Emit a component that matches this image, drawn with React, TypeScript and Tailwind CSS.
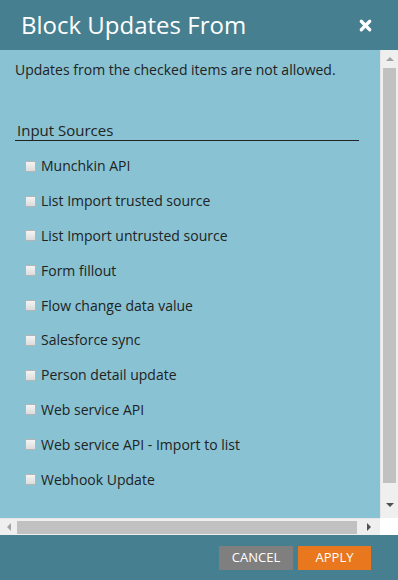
import { X } from "lucide-react";

const sources = [
  "Munchkin API",
  "List Import trusted source",
  "List Import untrusted source",
  "Form fillout",
  "Flow change data value",
  "Salesforce sync",
  "Person detail update",
  "Web service API",
  "Web service API - Import to list",
  "Webhook Update",
];

function Arrow({ dir, className }: { dir: "up" | "down" | "left" | "right"; className: string }) {
  const pts = {
    up: "0,4 4,0 8,4",
    down: "0,0 8,0 4,4",
    left: "4,0 4,8 0,4",
    right: "0,0 0,8 4,4",
  }[dir];
  const vertical = dir === "up" || dir === "down";
  return (
    <svg width={vertical ? 8 : 4} height={vertical ? 4 : 8} className={className}>
      <polygon points={pts} fill="currentColor" />
    </svg>
  );
}

export default function App() {
  return (
    <div
      className="w-[398px] h-[580px] flex flex-col bg-[#467f8f] overflow-hidden"
      style={{ fontFamily: "'Open Sans', 'Noto Sans', sans-serif" }}
    >
      {/* Header */}
      <div className="h-[50px] flex items-center justify-between pl-[21px] pr-[24px] shrink-0">
        <span className="text-white text-[24px] leading-none">Block Updates From</span>
        <X size={17} strokeWidth={4.5} className="text-white" />
      </div>

      {/* Body + vertical scrollbar */}
      <div className="flex h-[468px] shrink-0">
        <div className="flex-1 bg-[#88c2d3] pl-[15px] pt-[11px] text-[#222]">
          <p className="text-[14px] leading-[18px]">Updates from the checked items are not allowed.</p>

          <div className="mt-[42px] w-[344px] border-b border-[#222] pl-[2px] pb-[1px]">
            <span className="text-[15px] leading-[18px] block">Input Sources</span>
          </div>

          <ul className="mt-[8px] pl-[10px]">
            {sources.map((s) => (
              <li key={s} className="h-[34.8px] flex items-center gap-[5px]">
                <span className="w-[11px] h-[11px] border border-[#b5b5b5] bg-gradient-to-b from-[#f4f4f4] to-[#dcdcdc] rounded-[1px]" />
                <span className="text-[14px] leading-none">{s}</span>
              </li>
            ))}
          </ul>
        </div>

        <div className="w-[18px] bg-[#efefef] border-l border-[#e6e6e6] flex flex-col items-center pb-[4px]">
          <div className="h-[18px] flex items-center justify-center">
            <Arrow dir="up" className="text-[#a3a3a3]" />
          </div>
          <div className="w-[13px] h-[415px] bg-[#c1c1c1]" />
          <div className="flex-1" />
          <div className="h-[18px] flex items-center justify-center">
            <Arrow dir="down" className="text-[#505050]" />
          </div>
        </div>
      </div>

      {/* Horizontal scrollbar */}
      <div className="flex h-[17px] shrink-0">
        <div className="flex-1 bg-[#efefef] border-t border-[#e6e6e6] flex items-center">
          <div className="w-[17px] flex justify-center">
            <Arrow dir="left" className="text-[#a3a3a3]" />
          </div>
          <div className="w-[340px] h-[13px] bg-[#c1c1c1]" />
          <div className="flex-1 flex justify-center">
            <Arrow dir="right" className="text-[#505050]" />
          </div>
        </div>
        <div className="w-[18px] bg-white" />
      </div>

      {/* Footer */}
      <div className="flex-1 flex items-center justify-end gap-[5px] pr-[27px] pt-[1px]">
        <button className="w-[74px] h-[24px] bg-[#7f7f7f] text-white text-[13px] uppercase">Cancel</button>
        <button className="w-[73px] h-[24px] bg-[#e8771e] text-white text-[13px] uppercase">Apply</button>
      </div>
    </div>
  );
}
